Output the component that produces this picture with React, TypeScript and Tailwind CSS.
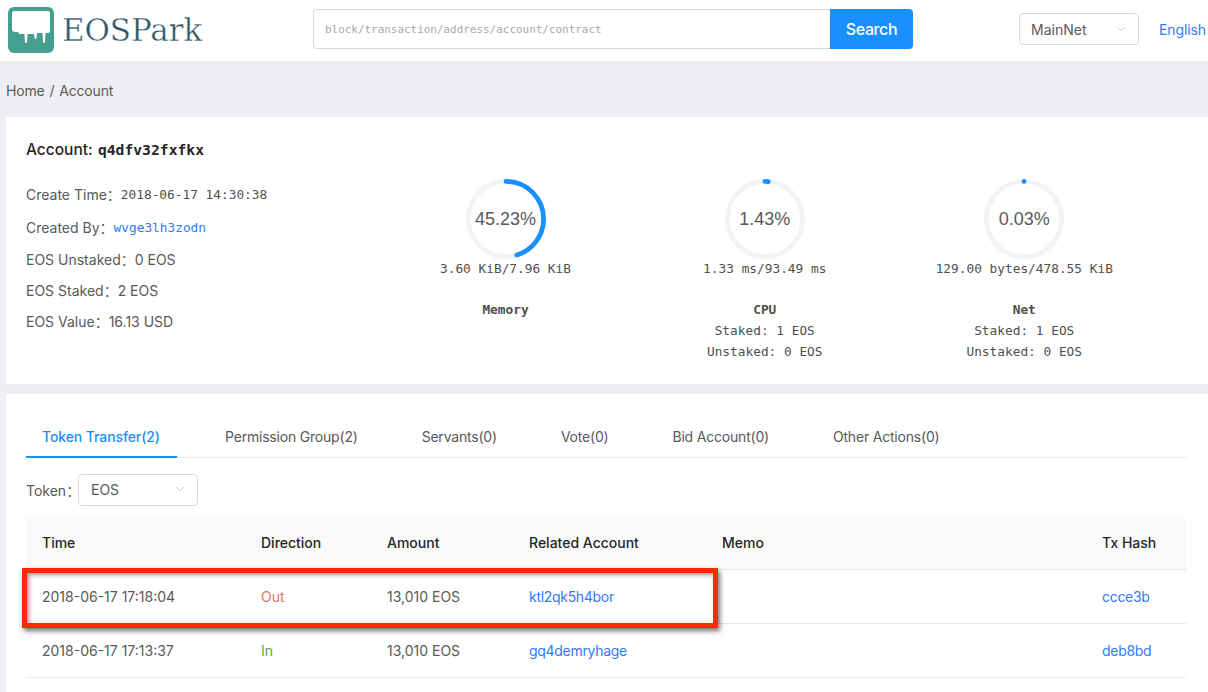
import { ChevronDown } from "lucide-react";

const sans = "font-['Inter','Noto_Sans_CJK_SC',sans-serif]";
const mono = "font-['DejaVu_Sans_Mono',monospace]";

function Logo() {
  return (
    <svg width="46" height="46" viewBox="0 0 46 46" className="mt-[2px] shrink-0">
      <rect x="0" y="0" width="46" height="46" rx="6" fill="#459f8e" />
      <path
        d="M6 4 H40 Q42 4 42 6 V24 Q42 26 40 26 H37.5 L37 35 Q36 37 35 35 L34.5 26 H29 L28.5 31 Q27.5 33 26.5 31 L26 27 H19.5 L19 35 Q18 37 17 35 L16.5 27 H11 L10 25 H7 Q4 25 4 22 V6 Q4 4 6 4 Z"
        fill="#ffffff"
      />
    </svg>
  );
}

function Gauge({ pct, sub }: { pct: number; sub: string }) {
  const r = 37.6;
  const c = 2 * Math.PI * r;
  return (
    <div className="relative h-[80px] w-[80px]">
      <svg width="80" height="80" viewBox="0 0 80 80" className="-rotate-90">
        <circle cx="40" cy="40" r={r} fill="none" stroke="#f3f3f3" strokeWidth="4.8" />
        <circle
          cx="40"
          cy="40"
          r={r}
          fill="none"
          stroke="#1890ff"
          strokeWidth="4.8"
          strokeLinecap="round"
          strokeDasharray={`${(c * pct) / 100} ${c}`}
        />
      </svg>
      <div className="absolute inset-0 flex items-center justify-center font-['Liberation_Sans',sans-serif] text-[18px] text-[#595959]">
        {sub}
      </div>
    </div>
  );
}

function Resource({
  pct,
  label,
  usage,
  title,
  lines,
}: {
  pct: number;
  label: string;
  usage: string;
  title: string;
  lines?: string[];
}) {
  return (
    <div className={`flex flex-col items-center ${mono} text-[12.8px] text-[#4f4f4f]`}>
      <Gauge pct={pct} sub={label} />
      <div className="h-[19px] leading-[19px]">{usage}</div>
      <div className="mt-[21px] h-[21px] font-bold leading-[21px]">{title}</div>
      {lines?.map((l) => (
        <div key={l} className="h-[21px] leading-[21px]">
          {l}
        </div>
      ))}
    </div>
  );
}

function Select({ value, className }: { value: string; className: string }) {
  return (
    <div
      className={`flex h-8 items-center justify-between rounded border border-[#d9d9d9] bg-white pr-[10px] text-[14px] text-[#595959] ${className}`}
    >
      <span>{value}</span>
      <ChevronDown size={14} strokeWidth={1.2} className="text-[#b5b5b5]" />
    </div>
  );
}

const tabs = ["Permission Group(2)", "Servants(0)", "Vote(0)", "Bid Account(0)", "Other Actions(0)"];
const grid = "grid grid-cols-[219px_126px_142px_193px_380px_100px] items-center";

function Row({
  time,
  dir,
  dirClass,
  acct,
  hash,
}: {
  time: string;
  dir: string;
  dirClass: string;
  acct: string;
  hash: string;
}) {
  return (
    <div className={`${grid} h-[54px] border-b border-[#e8e8e8] text-[14px] text-[#595959] [&>*]:pl-4`}>
      <div>{time}</div>
      <div className={dirClass}>{dir}</div>
      <div>13,010 EOS</div>
      <div className="tracking-[-0.3px] text-[#2f7bff]">{acct}</div>
      <div />
      <div className="tracking-[-0.3px] text-[#2f7bff]">{hash}</div>
    </div>
  );
}

export default function App() {
  return (
    <div className={`relative h-[692px] w-[1208px] overflow-hidden bg-[#eeeff4] ${sans} text-[14px] text-[#595959]`}>
      <header className="flex h-[61px] items-center bg-white pb-[3px] pl-[8px]">
        <Logo />
        <span className="ml-[8px] mt-[3px] w-[139px] font-['DejaVu_Serif',serif] text-[31px] leading-none tracking-[-0.1px] text-[#2b5566] [-webkit-text-stroke:0.45px_white]">
          EOSPark
        </span>
        <div className="ml-[112px] flex h-10 w-[600px]">
          <input
            readOnly
            placeholder="block/transaction/address/account/contract"
            className={`h-full w-[517px] rounded-l border border-r-0 border-[#d9d9d9] pl-[11px] ${mono} text-[10.95px] placeholder:text-[#a8a8a8]`}
          />
          <div className="flex h-full w-[83px] items-center justify-center rounded-r bg-[#1890ff] text-[16px] font-medium tracking-[-0.4px] text-white">
            Search
          </div>
        </div>
        <Select value="MainNet" className="ml-[106px] w-[120px] pl-[11px]" />
        <span className="ml-5 tracking-[-0.1px] text-[#2f7bff]">English</span>
      </header>

      <div className="flex h-[56px] items-center pl-[6px] pt-[2px] tracking-[-0.2px]">
        Home<span className="mx-[5px]">/</span>Account
      </div>

      <section className="ml-[6px] h-[267px] bg-white pl-5 pt-[22px]">
        <div className="grid grid-cols-[350px_259px_259.5px_259.5px]">
          <div>
            <div className="h-[22px] text-[15.5px] font-medium leading-[22px] text-[#262626]">
              Account: <span className={`${mono} ml-px text-[14.7px] font-bold`}>q4dfv32fxfkx</span>
            </div>
            <div className="mt-[23px] flex h-[20px] items-center">
              Create Time：<span className={`${mono} pt-px text-[12.8px] text-[#4f4f4f]`}>2018-06-17 14:30:38</span>
            </div>
            <div className="mt-[13px] flex h-[20px] items-center">
              Created By：<span className={`${mono} pt-px text-[12.8px] text-[#2f7bff]`}>wvge3lh3zodn</span>
            </div>
            <div className="mt-[13px] h-[20px] leading-[20px]">EOS Unstaked：0 EOS</div>
            <div className="mt-[11px] h-[20px] leading-[20px]">EOS Staked：2 EOS</div>
            <div className="mt-[11px] h-[20px] leading-[20px]">EOS Value：16.13 USD</div>
          </div>
          <div className="pt-[40px]">
            <Resource pct={45.23} label="45.23%" usage="3.60 KiB/7.96 KiB" title="Memory" />
          </div>
          <div className="pt-[40px]">
            <Resource
              pct={1.43}
              label="1.43%"
              usage="1.33 ms/93.49 ms"
              title="CPU"
              lines={["Staked: 1 EOS", "Unstaked: 0 EOS"]}
            />
          </div>
          <div className="pt-[40px]">
            <Resource
              pct={0.03}
              label="0.03%"
              usage="129.00 bytes/478.55 KiB"
              title="Net"
              lines={["Staked: 1 EOS", "Unstaked: 0 EOS"]}
            />
          </div>
        </div>
      </section>

      <section className="ml-[6px] mt-[10px] h-[298px] bg-white px-5 pt-[22px]">
        <nav className="flex h-[42px] w-[1160px] border-b border-[#e8e8e8]">
          <div className="h-[42px] w-[151px] border-b-2 border-[#1890ff] pl-4 pt-[11px] font-medium leading-[20px] tracking-[-0.1px] text-[#1890ff]">
            Token Transfer(2)
          </div>
          {tabs.map((t) => (
            <div key={t} className="ml-8 px-4 pt-[11px] leading-[20px] tracking-[-0.2px]">
              {t}
            </div>
          ))}
        </nav>
        <div className="mt-4 flex items-center">
          <span className="w-[52px]">Token：</span>
          <Select value="EOS" className="w-[120px] pb-[2px] pl-3" />
        </div>
        <div className="mt-[10px] w-[1160px]">
          <div className={`${grid} h-[54px] border-b border-[#e8e8e8] bg-[#fafafa] font-medium text-[#262626] [&>*]:pl-4`}>
            <div>Time</div>
            <div>Direction</div>
            <div>Amount</div>
            <div>Related Account</div>
            <div>Memo</div>
            <div>Tx Hash</div>
          </div>
          <Row
            time="2018-06-17 17:18:04"
            dir="Out"
            dirClass="text-[#e4736d]"
            acct="ktl2qk5h4bor"
            hash="ccce3b"
          />
          <Row
            time="2018-06-17 17:13:37"
            dir="In"
            dirClass="text-[#5fa84f]"
            acct="gq4demryhage"
            hash="deb8bd"
          />
        </div>
      </section>

      <div className="absolute left-[22px] top-[568px] h-[60px] w-[696px] border-[5px] border-[#ff2a00] shadow-[2px_3px_5px_rgba(0,0,0,0.55),inset_2px_2px_4px_rgba(0,0,0,0.4)]" />
    </div>
  );
}
